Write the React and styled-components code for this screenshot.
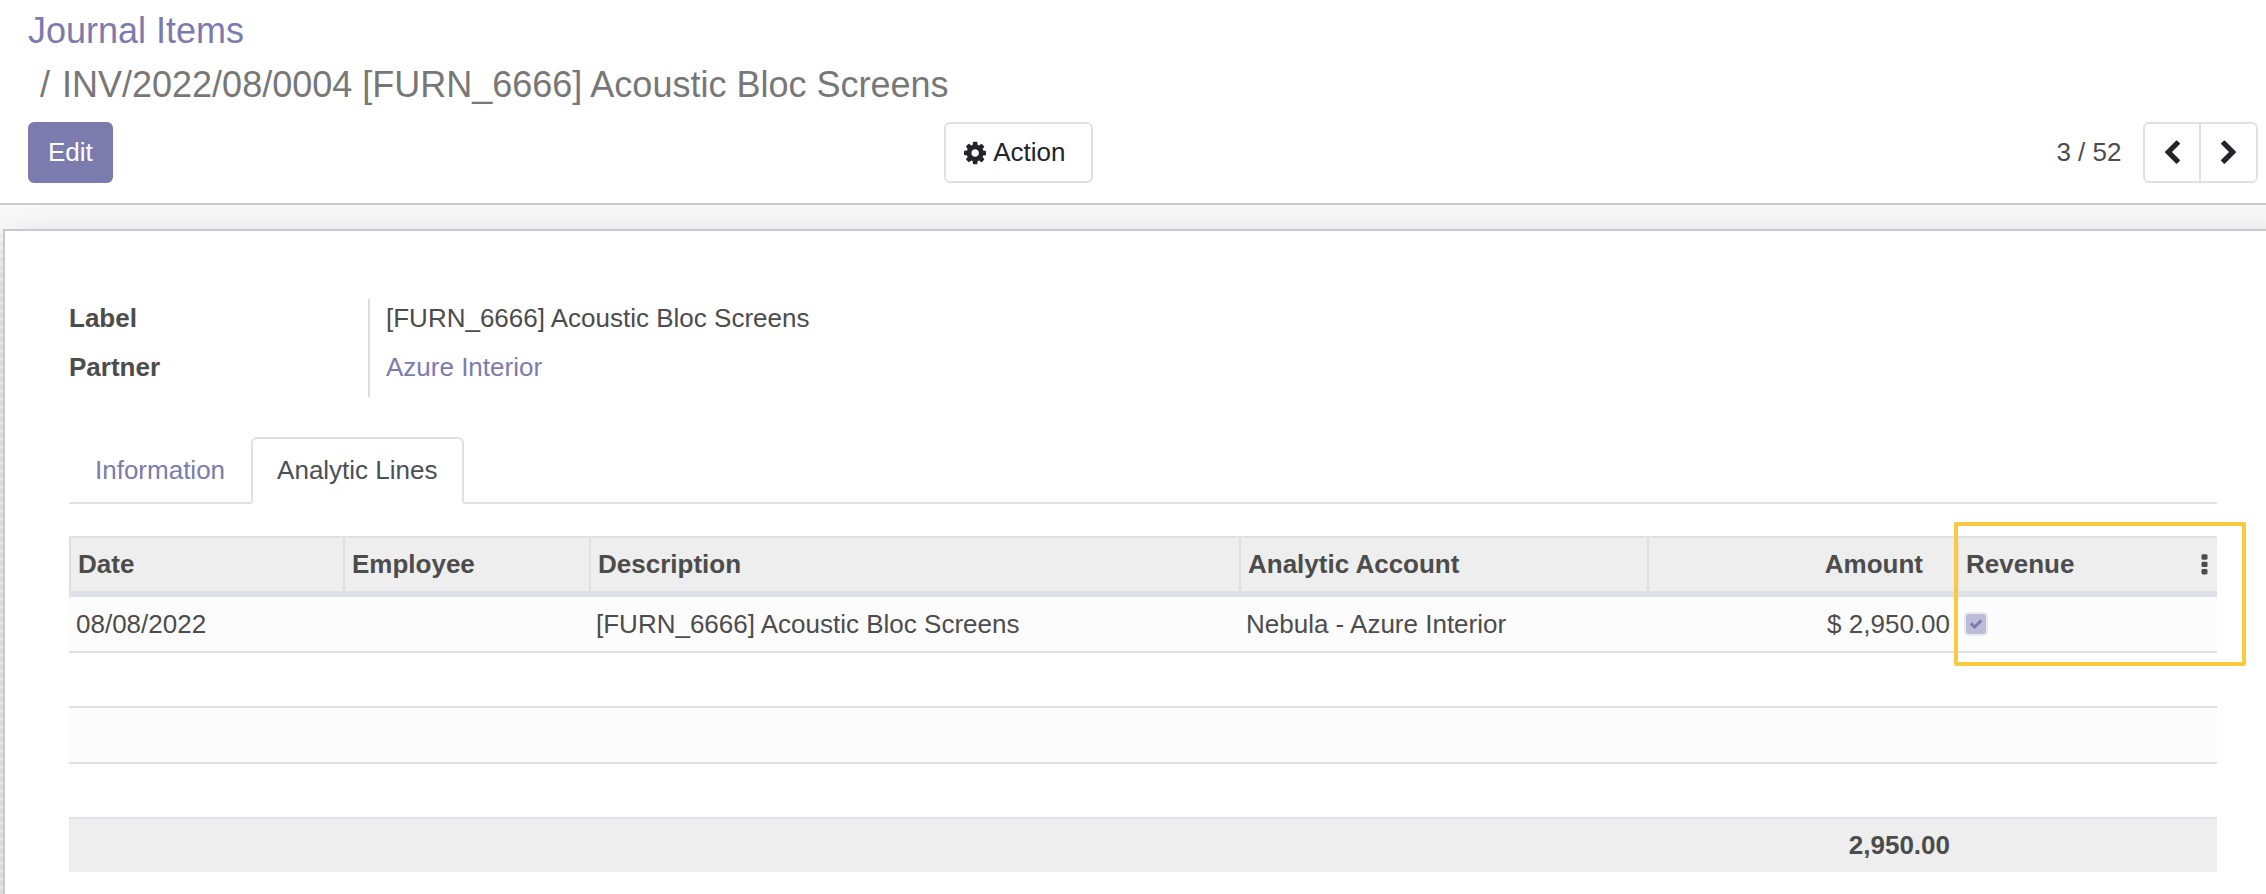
import React from "react";
import styled, { createGlobalStyle } from "styled-components";

const GlobalStyle = createGlobalStyle`
  *, *::before, *::after { box-sizing: border-box; }
  html, body { margin: 0; background: #fff; overflow: hidden; }
  body {
    font-family: "Liberation Sans", Arial, sans-serif;
    font-size: 26px;
    line-height: 39px;
    color: #4c4c4c;
  }
`;

const Page = styled.div`
  display: flex;
  flex-direction: column;
  height: 894px;
  overflow: hidden;
`;

const ControlPanel = styled.header`
  flex: none;
  height: 205px;
  padding: 4px 8px 0 28px;
  border-bottom: 2px solid #ccc;
  background: #fff;
`;

const Breadcrumb = styled.ol`
  list-style: none;
  margin: 0 0 10px;
  padding: 0;
  font-size: 36px;
  line-height: 54px;
`;

const Crumb = styled.li`
  color: ${(p) => (p.$active ? "#777" : "#7c7bad")};
  padding-left: ${(p) => (p.$active ? "12px" : "0")};
  white-space: pre;
`;

const Separator = styled.span`
  padding-right: 12px;
`;

const Toolbar = styled.div`
  display: grid;
  grid-template-columns: 916px 1fr auto;
  align-items: center;
  height: 61px;
`;

const Button = styled.button`
  display: inline-flex;
  align-items: center;
  justify-self: start;
  height: 61px;
  padding: 0 18px;
  border: 2px solid ${(p) => (p.$primary ? "#7c7bad" : "#dee2e6")};
  border-radius: 6px;
  background: ${(p) => (p.$primary ? "#7c7bad" : "#fff")};
  color: ${(p) => (p.$primary ? "#fff" : "#212529")};
  font: inherit;
`;

const ActionLabel = styled.span`
  padding: 0 7px;
`;

const Pager = styled.div`
  display: flex;
  align-items: center;
  gap: 21.5px;
`;

const PagerButtons = styled.div`
  display: flex;
  height: 61px;
  border: 2px solid #dee2e6;
  border-radius: 6px;
`;

const PagerButton = styled.button`
  display: flex;
  align-items: center;
  justify-content: center;
  width: ${(p) => (p.$last ? "57px" : "54px")};
  padding: 0;
  border: 0;
  border-left: ${(p) => (p.$last ? "2px solid #dee2e6" : "0")};
  background: none;
  color: #212529;
`;

const Glyph = styled.svg`
  display: block;
  flex: none;
  fill: currentColor;
`;

const FormView = styled.main`
  flex: 1;
  padding: 24px 0 0 3px;
  overflow: hidden;
  background:
    linear-gradient(#f8f8f8, #f8f8f8) 0 0 / 100% 24px no-repeat,
    repeating-conic-gradient(rgba(0, 0, 0, 0.04) 0% 25%, transparent 0% 50%)
      0 24px / 8px 8px repeat-y,
    #f8f8f8;
`;

const Sheet = styled.section`
  width: 2300px;
  height: 800px;
  padding: 68px 0 0 64px;
  border: 2px solid #c8c8d3;
  background: #fff;
  box-shadow: 0 10px 40px -12px rgba(0, 0, 0, 0.33);
`;

const FieldGroup = styled.dl`
  display: grid;
  grid-template-columns: 299px 1fr;
  margin: 0 0 40px;
`;

const FieldName = styled.dt`
  height: 49px;
  font-weight: bold;
`;

const FieldValue = styled.dd`
  height: 49px;
  margin: 0;
  padding-left: 16px;
  border-left: 2px solid #ddd;
  color: ${(p) => (p.$link ? "#7c7bad" : "inherit")};
`;

const Tabs = styled.nav`
  display: flex;
  width: 2148px;
  height: 67px;
  border-bottom: 2px solid #dee2e6;
`;

const Tab = styled.a`
  height: 67px;
  padding: 12px 24px;
  border: 2px solid;
  border-color: ${(p) => (p.$active ? "#dee2e6 #dee2e6 #fff" : "transparent")};
  border-radius: 6px 6px 0 0;
  background: ${(p) => (p.$active ? "#fff" : "none")};
  color: ${(p) => (p.$active ? "#495057" : "#7c7bad")};
`;

const TableArea = styled.div`
  position: relative;
  width: 2148px;
  margin-top: 32px;
`;

const Row = styled.div`
  display: grid;
  grid-template-columns: 274px 246px 650px 408px 310px 260px;
  height: ${(p) => p.$height}px;
  background: ${(p) => (p.$striped ? "#fcfcfc" : "#fff")};
  border-bottom: 2px solid #dee2e6;
`;

const HeadRow = styled(Row)`
  background: #eee;
  border-top: 2px solid #dee2e6;
  border-bottom: 6px solid #dee2e6;
  font-weight: bold;
`;

const TotalRow = styled(Row)`
  background: #eee;
  border-bottom: 0;
  font-weight: bold;
`;

const HeadCell = styled.div`
  display: flex;
  align-items: center;
  justify-content: ${(p) => (p.$numeric ? "flex-end" : "space-between")};
  padding: 0 ${(p) => (p.$numeric ? "34px" : "9px")} 0 7px;
  border-left: 2px solid #dfdfdf;
`;

const Cell = styled.div`
  display: flex;
  align-items: center;
  justify-content: ${(p) => (p.$numeric ? "flex-end" : "flex-start")};
  padding: 0 7px;
  white-space: pre;
`;

const CheckBox = styled.span`
  display: flex;
  align-items: center;
  justify-content: center;
  width: 24px;
  height: 24px;
  border: 2px solid #e6e8ee;
  border-radius: 5px;
  background: #bdbcd7;
  color: #7c7bad;
`;

const Highlight = styled.div`
  position: absolute;
  top: -14px;
  left: 1885px;
  width: 292px;
  height: 144px;
  border: 4px solid #f9c940;
  border-radius: 2px;
`;

const ICONS = {
  cog: "M1152 896q0-106-75-181t-181-75-181 75-75 181 75 181 181 75 181-75 75-181zm512-109v222q0 12-8 23t-20 13l-185 28q-19 54-39 91 35 50 107 138 10 12 10 25t-9 23q-27 37-99 108t-94 71q-12 0-26-9l-138-108q-44 23-91 38-16 136-29 186-7 28-36 28h-222q-14 0-24.5-8.5t-11.5-21.5l-28-184q-49-16-90-37l-141 107q-10 9-25 9-14 0-25-11-126-114-165-168-7-10-7-23 0-12 8-23 15-21 51-66.5t54-70.5q-27-50-41-99l-183-27q-13-2-21-12.5t-8-23.5v-222q0-12 8-23t19-13l186-28q14-46 39-92-40-57-107-138-10-12-10-24 0-10 9-23 26-36 98.5-107.5t94.5-71.5q13 0 26 10l138 107q44-23 91-38 16-136 29-186 7-28 36-28h222q14 0 24.5 8.5t11.5 21.5l28 184q49 16 90 37l142-107q9-9 24-9 13 0 25 10 129 119 165 170 7 8 7 22 0 12-8 23-15 21-51 66.5t-54 70.5q26 50 41 98l183 28q13 2 21 12.5t8 23.5z",
  left: "M1427 301l-531 531 531 531q19 19 19 45t-19 45l-166 166q-19 19-45 19t-45-19l-742-742q-19-19-19-45t19-45l742-742q19-19 45-19t45 19l166 166q19 19 19 45t-19 45z",
  right: "M1363 877l-742 742q-19 19-45 19t-45-19l-166-166q-19-19-19-45t19-45l531-531-531-531q-19-19-19-45t19-45l166-166q19-19 45-19t45 19l742 742q19 19 19 45t-19 45z",
  check: "M1671 566q0 40-28 68l-724 724-136 136q-28 28-68 28t-68-28l-136-136-362-362q-28-28-28-68t28-68l136-136q28-28 68-28t68 28l294 295 656-657q28-28 68-28t68 28l136 136q28 28 28 68z",
};

function Icon({ name, x = 0, width = 1792, size = 26 }) {
  return (
    <Glyph
      viewBox={`${x} 0 ${width} 1792`}
      width={(size * width) / 1792}
      height={size}
      aria-hidden="true"
    >
      <path d={ICONS[name]} />
    </Glyph>
  );
}

function OptionsIcon() {
  return (
    <Glyph width="7" height="21" viewBox="0 0 7 21" aria-hidden="true">
      <rect x="0.5" y="0.3" width="6" height="5.4" rx="1.4" />
      <rect x="0.5" y="7.7" width="6" height="5.4" rx="1.4" />
      <rect x="0.5" y="15.1" width="6" height="5.4" rx="1.4" />
    </Glyph>
  );
}

export default function App() {
  return (
    <Page>
      <GlobalStyle />
      <ControlPanel>
        <Breadcrumb>
          <Crumb>Journal Items</Crumb>
          <Crumb $active>
            <Separator>/</Separator>
            INV/2022/08/0004 [FURN_6666] Acoustic Bloc Screens
          </Crumb>
        </Breadcrumb>
        <Toolbar>
          <Button $primary>Edit</Button>
          <Button>
            <Icon name="cog" x={128} width={1536} />
            <ActionLabel>Action</ActionLabel>
          </Button>
          <Pager>
            <span>3 / 52</span>
            <PagerButtons>
              <PagerButton aria-label="Previous">
                <Icon name="left" />
              </PagerButton>
              <PagerButton $last aria-label="Next">
                <Icon name="right" />
              </PagerButton>
            </PagerButtons>
          </Pager>
        </Toolbar>
      </ControlPanel>
      <FormView>
        <Sheet>
          <FieldGroup>
            <FieldName>Label</FieldName>
            <FieldValue>[FURN_6666] Acoustic Bloc Screens</FieldValue>
            <FieldName>Partner</FieldName>
            <FieldValue $link>Azure Interior</FieldValue>
          </FieldGroup>
          <Tabs>
            <Tab>Information</Tab>
            <Tab $active>Analytic Lines</Tab>
          </Tabs>
          <TableArea>
            <HeadRow $height={61}>
              <HeadCell>Date</HeadCell>
              <HeadCell>Employee</HeadCell>
              <HeadCell>Description</HeadCell>
              <HeadCell>Analytic Account</HeadCell>
              <HeadCell $numeric>Amount</HeadCell>
              <HeadCell>
                Revenue
                <OptionsIcon />
              </HeadCell>
            </HeadRow>
            <Row $height={56} $striped>
              <Cell>08/08/2022</Cell>
              <Cell />
              <Cell>[FURN_6666] Acoustic Bloc Screens</Cell>
              <Cell>Nebula - Azure Interior</Cell>
              <Cell $numeric>$ 2,950.00</Cell>
              <Cell>
                <CheckBox>
                  <Icon name="check" size={14} />
                </CheckBox>
              </Cell>
            </Row>
            <Row $height={55} />
            <Row $height={56} $striped />
            <Row $height={55} />
            <TotalRow $height={53}>
              <Cell />
              <Cell />
              <Cell />
              <Cell />
              <Cell $numeric>2,950.00</Cell>
              <Cell />
            </TotalRow>
            <Highlight />
          </TableArea>
        </Sheet>
      </FormView>
    </Page>
  );
}
